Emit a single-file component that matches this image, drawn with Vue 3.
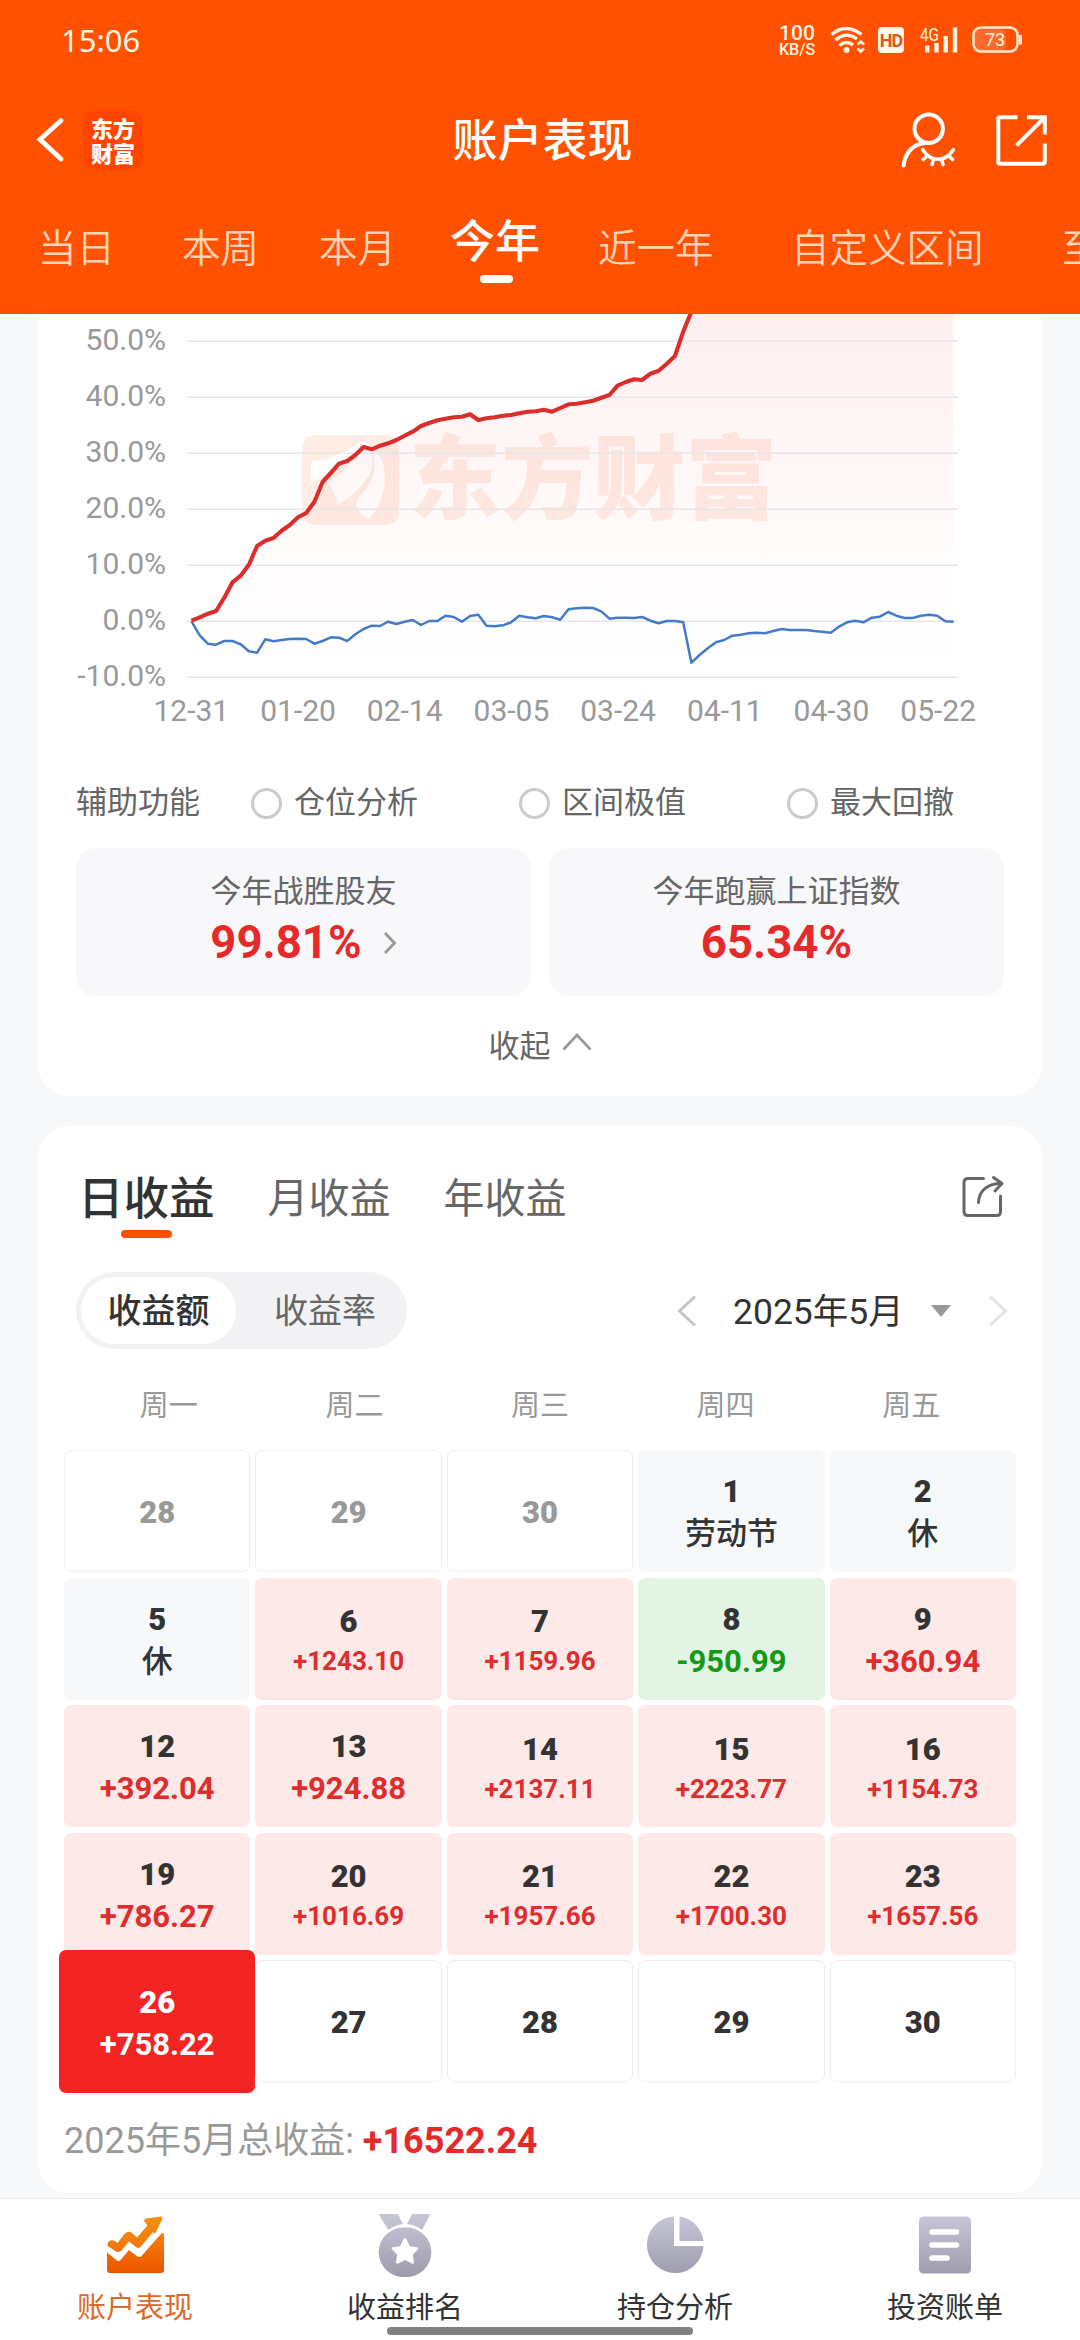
<script setup>
const tabs = ['当日', '本周', '本月', '今年', '近一年', '自定义区间', '至今']
const yLabels = ['50.0%', '40.0%', '30.0%', '20.0%', '10.0%', '0.0%', '-10.0%']
const xLabels = ['12-31', '01-20', '02-14', '03-05', '03-24', '04-11', '04-30', '05-22']
const gridLines = [341, 397, 453, 509, 565, 621, 677]

// Series samples, one per trading day, in thirds of a pixel below the plot's top edge
const account = [932, 922, 911, 903, 863, 817, 797, 764, 708, 692, 684, 662, 645, 622, 609, 575, 516, 489, 461, 453, 435, 411, 418, 407, 400, 390, 377, 365, 348, 339, 331, 326, 322, 320, 313, 330, 325, 322, 317, 315, 310, 305, 304, 299, 305, 294, 283, 281, 277, 272, 263, 255, 227, 216, 208, 210, 191, 182, 161, 138, 65, 5, -60]
const index = [934, 976, 1001, 1004, 993, 993, 1003, 1024, 1028, 988, 994, 990, 987, 986, 987, 1001, 993, 982, 983, 993, 973, 957, 947, 948, 935, 942, 935, 930, 945, 933, 933, 917, 921, 935, 918, 914, 947, 949, 946, 937, 917, 922, 925, 918, 922, 929, 898, 895, 893, 894, 904, 926, 923, 923, 924, 921, 932, 940, 933, 933, 937, 1058, 1035, 1015, 997, 990, 977, 974, 970, 968, 970, 963, 957, 960, 960, 960, 963, 965, 968, 950, 937, 932, 937, 923, 920, 906, 917, 924, 924, 917, 914, 917, 934, 935]
const toPoints = (s) => s.map((v, i) => `${(191.5 + i * 8.195).toFixed(1)},${(310 + v / 3).toFixed(1)}`).join(' ')
const accountPoints = toPoints(account)
const indexPoints = toPoints(index)
const areaPoints = `191.5,677 ${accountPoints} 953.6,290 953.6,677`

const options = ['仓位分析', '区间极值', '最大回撤']
const weekdays = ['周一', '周二', '周三', '周四', '周五']
const up = (d, v) => ({ d, v, k: 'up' })
const days = [
  { d: 28, k: 'empty muted' }, { d: 29, k: 'empty muted' }, { d: 30, k: 'empty muted' }, { d: 1, v: '劳动节', k: 'rest' }, { d: 2, v: '休', k: 'rest' },
  { d: 5, v: '休', k: 'rest' }, up(6, '+1243.10'), up(7, '+1159.96'), { d: 8, v: '-950.99', k: 'down' }, up(9, '+360.94'),
  up(12, '+392.04'), up(13, '+924.88'), up(14, '+2137.11'), up(15, '+2223.77'), up(16, '+1154.73'),
  up(19, '+786.27'), up(20, '+1016.69'), up(21, '+1957.66'), up(22, '+1700.30'), up(23, '+1657.56'),
  { d: 26, v: '+758.22', k: 'picked' }, { d: 27, k: 'empty' }, { d: 28, k: 'empty' }, { d: 29, k: 'empty' }, { d: 30, k: 'empty' },
]
</script>

<template>
  <div class="page">
    <header class="top">
      <div class="status">
        <span class="time">15:06</span>
        <div class="indicators">
          <div class="speed"><b>100</b><span>KB/S</span></div>
          <svg class="wifi" viewBox="0 0 36 28" width="36" height="28">
            <g fill="none" stroke="#fff3e4" stroke-width="3.4">
              <path d="M1.5 8.5Q16 -3.5 31.500 8.500" />
              <path d="M5.500 14Q16 5 27 13" />
              <path d="M9.500 19.500Q16 14 23 19" />
            </g>
            <circle cx="16.500" cy="24" r="3" fill="#fff3e4" />
            <path d="M27.500 18.500L30.800 15.500L34 18.500M27.500 22.500L30.800 25.500L34 22.500" fill="none" stroke="#fff3e4" stroke-width="2.600" />
          </svg>
          <span class="hd">HD</span>
          <svg class="signal" viewBox="0 0 40 28" width="40" height="28">
            <text x="0" y="14.500" font-size="18" textLength="19" lengthAdjust="spacingAndGlyphs" fill="#fff3e4">4G</text>
            <path d="M7.200 26.500V19.500M16.500 26.500V17M25.700 26.500V10M35 26.500V1.500" stroke="#fff3e4" stroke-width="4.400" />
          </svg>
          <svg class="battery" viewBox="0 0 52 28" width="52" height="28">
            <rect x="3" y="3" width="31" height="22" rx="5" fill="#ff6a2c" />
            <rect x="1.500" y="1.500" width="44" height="24" rx="7.500" fill="none" stroke="#ffe9d2" stroke-width="2.600" />
            <path d="M48.500 9V18.500" stroke="#ffe9d2" stroke-width="3" />
            <text x="13" y="19.500" font-size="18" fill="#fff3e4">73</text>
          </svg>
        </div>
      </div>
      <div class="bar">
        <div class="bar-left">
          <svg viewBox="0 0 30 48" width="30" height="48"><path d="M26 4.500L5 23.500L26 43" fill="none" stroke="#fff" stroke-width="4.800" stroke-linecap="round" /></svg>
          <div class="logo"><span>东方</span><span>财富</span></div>
        </div>
        <h1>账户表现</h1>
        <svg class="bar-icons" viewBox="900 108 150 60" width="150" height="60">
          <g fill="none" stroke="#fff" stroke-width="4" stroke-linecap="round" stroke-linejoin="round">
            <circle cx="928.700" cy="126.700" r="14.200" />
            <path d="M903.600 163.500C905 151 913 141.500 926 141" />
            <path d="M922.700 147.700Q929 157.300 938 157.300T953.300 147.700" stroke-width="3.600" />
            <path d="M927.500 153.500L923.300 157.500M933.500 157L932 162.500M941.500 157L943 162.500M948.300 153.500L952.500 157.500" stroke-width="3.600" />
            <path d="M1015.500 115.300H1000.500Q998.300 115.300 998.300 117.500V159.500Q998.300 161.800 1000.500 161.800H1042.500Q1044.800 161.800 1044.800 159.500V143.500" stroke-linecap="square" />
            <path d="M1029 115.300H1044.800V130.500M1044 116L1018 142" stroke-linecap="square" stroke-linejoin="miter" />
          </g>
        </svg>
      </div>
      <nav class="tabs">
        <span v-for="(t, i) in tabs" :key="t" :class="{ on: i === 3 }">{{ t }}</span>
      </nav>
    </header>

    <main>
      <section class="card chart-card">
        <div class="chart">
          <div class="ylabels"><span v-for="y in yLabels" :key="y">{{ y }}</span></div>
          <svg class="plot" viewBox="180 314 790 370" width="790" height="370">
            <defs>
              <linearGradient id="area" x1="0" y1="314" x2="0" y2="677" gradientUnits="userSpaceOnUse">
                <stop offset="0" stop-color="#ee2b2b" stop-opacity=".075" />
                <stop offset=".45" stop-color="#ee2b2b" stop-opacity=".035" />
                <stop offset=".7" stop-color="#ee4b2b" stop-opacity=".014" />
                <stop offset="1" stop-color="#ee2b2b" stop-opacity="0" />
              </linearGradient>
            </defs>
            <g fill="#f8865c" fill-opacity=".16">
              <path fill-rule="evenodd" d="M317 435H384Q399 435 399 450V510Q399 525 384 525H317Q302 525 302 510V450Q302 435 317 435Z
                M311 483Q310 465 312 461Q340 459 361 441Q359 456 344 465Q328 474 311 483Z
                M328 482Q342 474 352 461Q362 449 364 441Q377 449 370 474Q359 492 338 505Q335 493 328 482Z
                M370 447Q385 455 385 480Q384 503 368 520Q358 511 356 505Q357 498 366 489Q381 470 370 447Z" />
              <text x="409" y="512" class="mark">东方财富</text>
            </g>
            <polygon :points="areaPoints" fill="url(#area)" />
            <path v-for="g in gridLines" :key="g" :d="`M187 ${g + 0.3}H958`" stroke="#e6e6ea" stroke-width="1.400" />
            <polyline :points="indexPoints" fill="none" stroke="#447bc9" stroke-width="2.500" stroke-linejoin="round" />
            <polyline :points="accountPoints" fill="none" stroke="#dc2c2c" stroke-width="4.100" stroke-linejoin="round" />
          </svg>
        </div>
        <div class="xlabels"><span v-for="x in xLabels" :key="x">{{ x }}</span></div>
        <div class="options">
          <span class="caption">辅助功能</span>
          <label v-for="o in options" :key="o"><i></i>{{ o }}</label>
        </div>
        <div class="stats">
          <div class="stat">
            <span>今年战胜股友</span>
            <div class="value"><b>99.81%</b>
              <svg viewBox="0 0 14 24" width="14" height="24"><path d="M2 2L11.500 12L2 22" fill="none" stroke="#999" stroke-width="2.800" /></svg>
            </div>
          </div>
          <div class="stat">
            <span>今年跑赢上证指数</span>
            <div class="value"><b>65.34%</b></div>
          </div>
        </div>
        <div class="fold">收起
          <svg viewBox="0 0 30 20" width="30" height="20"><path d="M1.500 17.500L15 3L28.500 17.500" fill="none" stroke="#999" stroke-width="2.800" /></svg>
        </div>
      </section>

      <section class="card calendar">
        <div class="periods">
          <span class="on">日收益</span><span>月收益</span><span>年收益</span>
          <svg viewBox="0 0 44 44" width="44" height="44">
            <g fill="none" stroke="#666" stroke-width="3" stroke-linecap="round">
              <path d="M22.500 3.500H7Q3 3.500 3 7.500V36.500Q3 40.500 7 40.500H35.500Q39.500 40.500 39.500 36.500V21" />
              <path d="M17.500 27.500C18 15 27 8.500 40.500 8.500M32.500 2.500L41 8.500L34 16" stroke-linejoin="round" />
            </g>
          </svg>
        </div>
        <div class="controls">
          <div class="toggle"><span class="on">收益额</span><span>收益率</span></div>
          <div class="month">
            <svg viewBox="0 0 20 32" width="20" height="32"><path d="M18 1.500L2.500 16L18 30.500" fill="none" stroke="#c4c4c4" stroke-width="3" /></svg>
            <span>2025年5月</span>
            <svg class="tri" viewBox="0 0 20 12" width="20" height="12"><path d="M0 0H20L10 12Z" fill="#999" /></svg>
            <svg viewBox="0 0 20 32" width="20" height="32"><path d="M2 1.500L17.500 16L2 30.500" fill="none" stroke="#e4e4e4" stroke-width="3" /></svg>
          </div>
        </div>
        <div class="week"><span v-for="w in weekdays" :key="w">{{ w }}</span></div>
        <div class="grid">
          <div v-for="(c, i) in days" :key="i" class="cell" :class="c.k">
            <b>{{ c.d }}</b>
            <em v-if="c.v" :class="{ small: c.v.length > 7 }">{{ c.v }}</em>
          </div>
        </div>
        <p class="total">2025年5月总收益: <b>+16522.24</b></p>
      </section>
    </main>

    <footer class="nav">
      <div class="item on">
        <svg viewBox="0 0 64 64" width="64" height="64">
          <defs>
            <linearGradient id="hot" x1="0" y1="0" x2="0" y2="1"><stop offset="0" stop-color="#f5800b" /><stop offset="1" stop-color="#ec5500" /></linearGradient>
            <linearGradient id="hotLine" x1="0" y1="0" x2="0" y2="1"><stop offset="0" stop-color="#f5920f" /><stop offset="1" stop-color="#f07408" /></linearGradient>
            <linearGradient id="cool" x1="0" y1="0" x2="0" y2="64" gradientUnits="userSpaceOnUse"><stop offset="0" stop-color="#c9c8d8" /><stop offset="1" stop-color="#9c9bac" /></linearGradient>
          </defs>
          <path d="M4 39.500L14 47.500Q16 48.500 17.500 47L26 37L34.500 43.500Q37 44.500 38.500 43L57 22Q61 18 61 22.500V57Q61 60 58 60H7Q4 60 4 57Z" fill="url(#hot)" />
          <path d="M4.500 31Q6 26 11 27.500L14.500 30L22 20.500Q25.500 17.500 29 20L34 24.500L44.500 12.500L41 8Q41 6 43 5.500L57.500 3.500Q60 3.500 59 6.500L52.500 20Q51 21 50 19L38 33.500Q35.500 36 33 34L26 28.500L18.500 37.500Q15.500 40 12.500 38L5.500 33.500Q4 32.500 4.500 31Z" fill="url(#hotLine)" />
        </svg>
        <span>账户表现</span>
      </div>
      <div class="item">
        <svg viewBox="0 0 64 64" width="64" height="64">
          <g fill="url(#cool)">
            <path d="M7 1H25L30 11Q22 12 15.500 17L6 2Q6 1 7 1Z" /><path d="M39 1H56.500Q57.500 1 57 2L49 17Q43 12 34 11Z" />
            <path fill-rule="evenodd" d="M32 14.500A24.800 24.800 0 1 0 32 64A24.800 24.800 0 1 0 32 14.500ZM32 25Q33 25 33.600 26.500L36.800 33.300L44 34.300Q46.500 34.800 44.700 36.700L39.800 41.500L41 49Q41 51.500 38.900 50.500L32 47L25.100 50.500Q23 51.500 23 49L24.200 41.500L19.300 36.700Q17.500 34.800 20 34.300L27.200 33.300L30.400 26.500Q31 25 32 25Z" />
          </g>
        </svg>
        <span>收益排名</span>
      </div>
      <div class="item">
        <svg viewBox="0 0 64 64" width="64" height="64">
          <g fill="url(#cool)"><path d="M31 3.500V33H60.500A28.300 28.300 0 1 1 31 3.500Z" /><path d="M36.500 3.500A28 28 0 0 1 60.500 28H36.500Z" /></g>
        </svg>
        <span>持仓分析</span>
      </div>
      <div class="item">
        <svg viewBox="0 0 64 64" width="64" height="64">
          <rect x="6" y="3.500" width="52" height="57" rx="4.500" fill="url(#cool)" />
          <path d="M19 19H43.500M19 32H43.500M19 45H34" stroke="#fff" stroke-width="5.600" stroke-linecap="round" />
        </svg>
        <span>投资账单</span>
      </div>
      <i class="home"></i>
    </footer>
  </div>
</template>

<style>
body { background: #f7f8fa; }
</style>

<style scoped>
.page { width: 1080px; height: 2340px; display: flex; flex-direction: column; overflow: hidden; background: #f7f8fa; color: #333; font-family: Roboto, "Noto Sans CJK SC", sans-serif; }
.page * { box-sizing: border-box; }
svg { display: block; flex: none; }
em, i { font-style: normal; }

.top { height: 314px; flex: none; background: #ff5100; color: #fff; }
.status { height: 80px; padding: 0 56px 0 61px; display: flex; justify-content: space-between; align-items: center; }
.time { color: #fff3e4; font-family: "Noto Sans", sans-serif; font-size: 31px; line-height: 40px; padding-bottom: 1px; }
.indicators { display: flex; align-items: center; height: 80px; }
.speed { width: 36px; margin-right: 15px; padding-top: 2px; display: flex; flex-direction: column; align-items: center; color: #fff3e4; font-size: 16px; line-height: 16px; font-weight: 500; }
.speed b { font-size: 21px; line-height: 18px; font-weight: 500; }
.wifi { margin-right: 12px; }
.hd { width: 26px; height: 26px; border-radius: 4px; background: #fff6ea; color: #e0561c; font-size: 18px; line-height: 27px; text-align: center; font-weight: 700; margin-right: 16px; letter-spacing: -1px; }
.signal { margin-right: 12px; overflow: visible; }
.bar { height: 120px; display: grid; grid-template-columns: 1fr auto 1fr; align-items: center; padding: 0 30px 0 35px; }
.bar-left { display: flex; align-items: center; gap: 18px; }
.logo { width: 60px; height: 60px; border-radius: 12px; background: #ff4500; display: flex; flex-direction: column; align-items: center; justify-content: center; font-size: 22px; line-height: 25px; font-weight: 900; font-family: "Noto Sans CJK SC", sans-serif; }
h1 { margin: 0; padding-top: 4px; font-size: 45px; line-height: 60px; font-weight: 500; }
.bar-icons { justify-self: end; overflow: visible; }
.tabs { height: 114px; display: grid; grid-template-columns: 144px 137px 131px 148px 193px 271px 80px; padding-left: 38px; overflow: hidden; font-size: 38.500px; line-height: 97px; color: #ffd3b8; white-space: nowrap; font-weight: 350; }
.tabs .on { color: #fff; font-size: 45px; font-weight: 500; line-height: 86px; }
.tabs .on::after { content: ""; display: block; width: 33px; height: 8px; border-radius: 4px; background: #fff; margin: -11px 0 0 30px; }

main { flex: 1; overflow: hidden; padding: 0 38px; }
.card { background: #fff; border-radius: 31px; }
.chart-card { height: 782px; border-radius: 0 0 31px 31px; }
.chart { display: flex; height: 370px; }
.ylabels { width: 128px; text-align: right; font-size: 30px; line-height: 52px; color: #999; margin-right: 14px; }
.ylabels span { display: block; height: 56.070px; }
.xlabels { display: flex; margin-left: 100px; height: 52px; font-size: 30px; line-height: 53px; color: #999; }
.mark { font-family: "Noto Sans CJK SC", sans-serif; font-weight: 900; font-size: 92px; }
.xlabels span { width: 106.700px; text-align: center; flex: none; }
.options { height: 134px; padding-left: 38px; display: flex; align-items: center; font-size: 31px; line-height: 136px; color: #666; }
.caption { width: 175px; flex: none; }
.options label { width: 268px; flex: none; display: flex; align-items: center; gap: 12px; }
.options i { width: 31px; height: 31px; border: 3px solid #ccc; border-radius: 50%; }
.stats { display: flex; gap: 18px; padding: 0 38px; margin-top: -22px; }
.stat { flex: 1; height: 148px; border-radius: 20px; background: #f8f8fb; display: flex; flex-direction: column; align-items: center; padding-top: 21px; font-size: 31px; line-height: 46px; color: #666; }
.value { display: flex; align-items: center; gap: 21px; height: 56px; color: #e62a2a; font-size: 45.500px; }
.fold { display: flex; justify-content: center; align-items: center; gap: 11px; height: 95px; font-size: 31px; color: #666; }
.fold svg { margin-top: -4px; }

.calendar { margin-top: 30px; height: 1067px; padding: 0 26px; }
.periods { height: 146px; display: flex; align-items: flex-start; font-size: 41px; line-height: 60px; color: #666; padding: 40px 11px 0 14px; }
.periods span { margin-right: 53px; padding-top: 3px; }
.periods .on { font-size: 45.500px; font-weight: 500; color: #333; padding: 4px 0 0; }
.periods .on::after { content: ""; display: block; width: 51px; height: 8px; border-radius: 4px; background: #ff5100; margin: 0 auto; }
.periods svg { margin-left: auto; margin-top: 9px; }
.controls { display: flex; justify-content: space-between; align-items: center; padding: 0 8px 0 12px; height: 77px; }
.toggle { display: flex; width: 331px; height: 77px; padding: 5px; border-radius: 39px; background: #f2f2f4; font-size: 34px; line-height: 69px; text-align: center; color: #666; }
.toggle span { width: 155px; height: 67px; flex: none; }
.toggle span + span { flex: 1; padding-left: 12px; }
.toggle .on { background: #fff; border-radius: 34px; color: #333; font-weight: 500; }
.month { display: flex; align-items: center; font-size: 35.500px; line-height: 60px; }
.month span { margin: 0 28px 0 36px; padding-top: 3px; width: 170px; white-space: nowrap; }
.month .tri { margin-right: 37px; }
.week { display: flex; margin: 0 12px; height: 101px; line-height: 115px; font-size: 29px; color: #999; }
.week span { flex: 1; text-align: center; }
.grid { display: grid; grid-template-columns: repeat(5, 1fr); grid-auto-rows: 122px; gap: 5.500px 5px; }
.cell { border-radius: 7px; display: flex; flex-direction: column; align-items: center; justify-content: center; padding-top: 2px; font-size: 31px; font-weight: 700; }
.cell b { line-height: 43px; }
.cell em { line-height: 41px; }
.cell em.small { font-size: 26px; line-height: 36px; }
.empty { border: 1.500px solid #eee; padding-top: 3px; }
.muted { color: #999; }
.rest { background: #f7f8fa; }
.rest em { font-weight: 500; }
.up { background: #fde9e8; }
.up em { color: #de2d2d; }
.down { background: #e4f4e4; }
.down em { color: #129a12; }
.picked { background: #f32424; color: #fff; margin: -10px -5px -11px; z-index: 1; }
.total { margin: 31px 0 0; font-size: 36px; line-height: 56px; color: #999; }
.total b { color: #e62a2a; }

.nav { position: relative; height: 142px; flex: none; background: #fff; border-top: 1px solid #ebebee; display: flex; }
.item { flex: 1; display: flex; flex-direction: column; align-items: center; padding-top: 14px; font-size: 29px; line-height: 40px; color: #333; }
.item span { margin-top: 11px; }
.item.on { color: #dd6a2a; }
.home { position: absolute; left: 387px; top: 128px; width: 306px; height: 8px; border-radius: 4px; background: #808080; }
</style>
